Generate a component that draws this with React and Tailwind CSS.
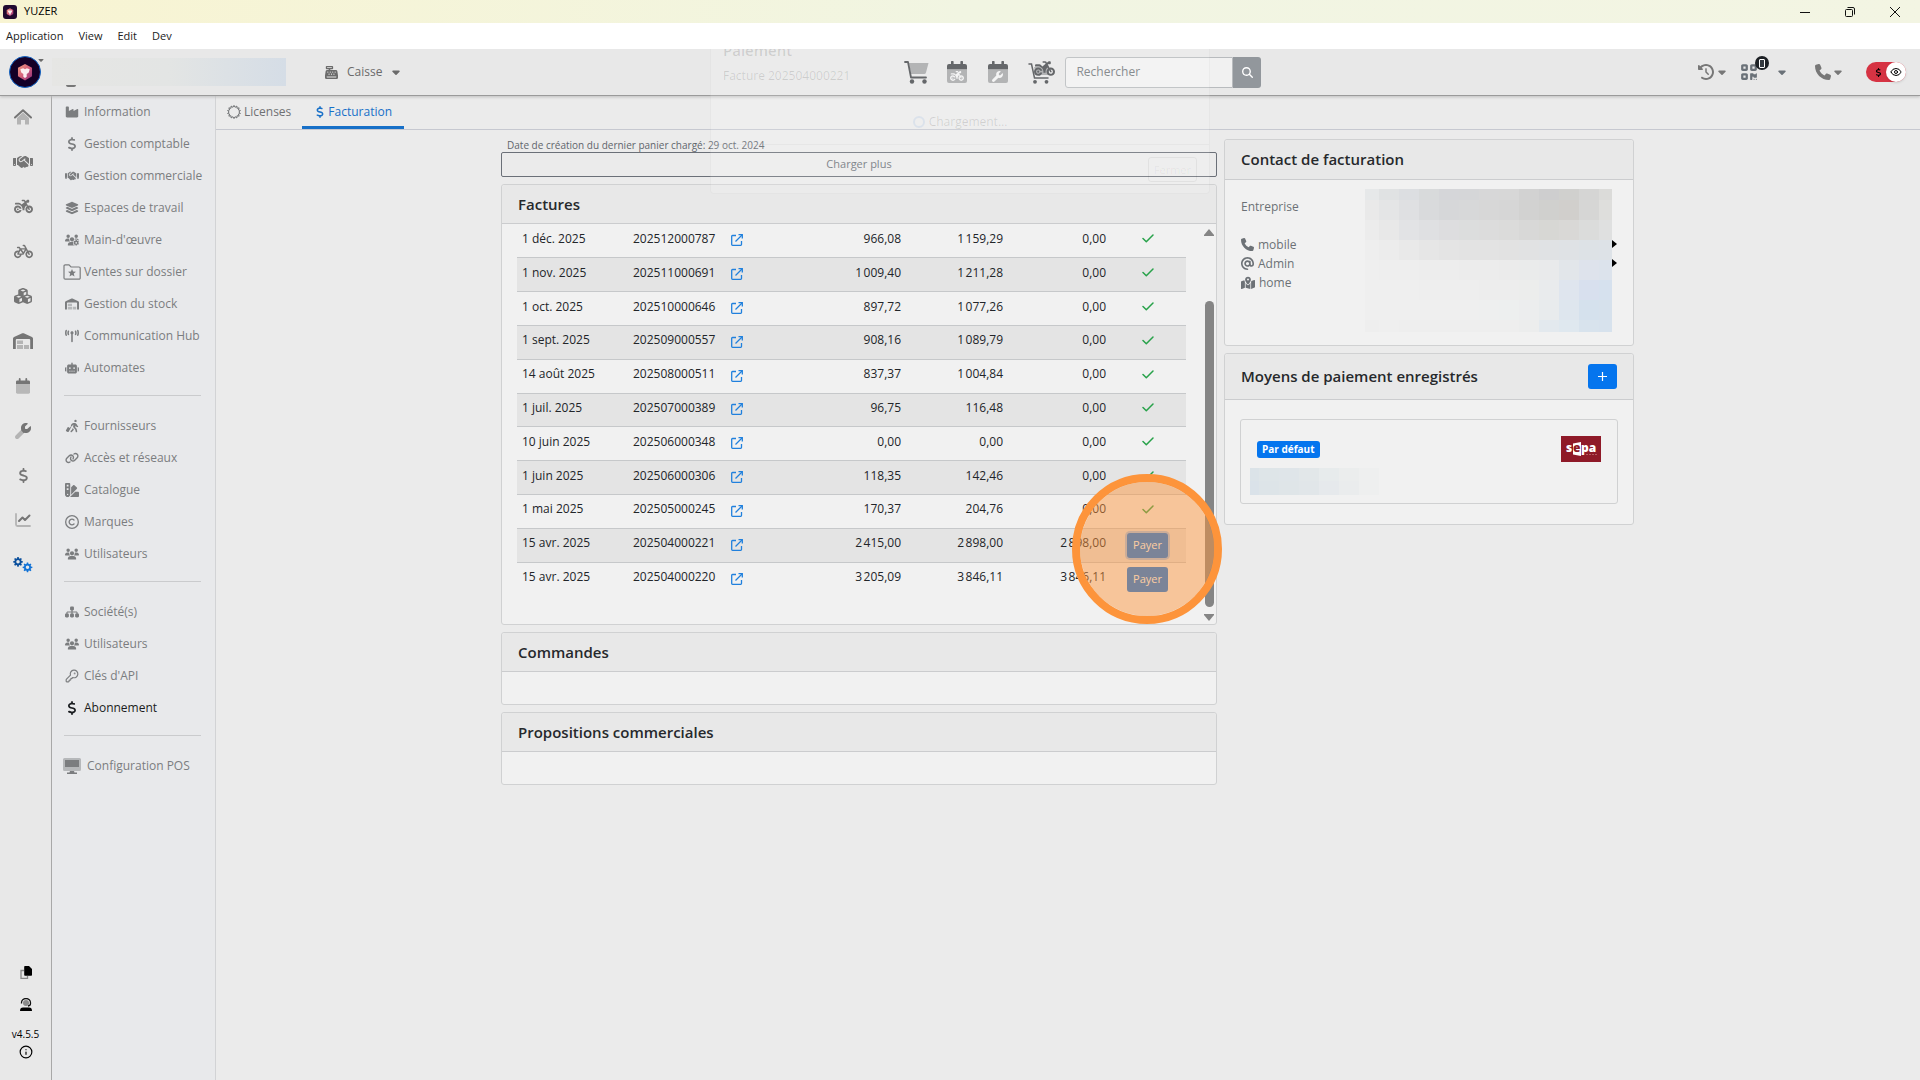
import clsx from "clsx";
import {
  FaIndustry, FaDollarSign, FaHandshake, FaLayerGroup, FaUsersGear,
  FaTowerBroadcast, FaRobot, FaPersonWalkingLuggage, FaLink, FaSwatchbook, FaRegCopyright,
  FaUsers, FaSitemap, FaMotorcycle, FaBicycle, FaCubes, FaQrcode, FaPhone,
  FaClockRotateLeft, FaAt, FaMapLocationDot, FaCashRegister, FaCaretDown, FaMagnifyingGlass,
} from "react-icons/fa6";
import { Eye, Info, KeyRound } from "lucide-react";

const invoices = [
  { date: "1 déc. 2025", number: "202512000787", ht: "966,08", ttc: "1\u202f159,29", due: "0,00" },
  { date: "1 nov. 2025", number: "202511000691", ht: "1\u202f009,40", ttc: "1\u202f211,28", due: "0,00" },
  { date: "1 oct. 2025", number: "202510000646", ht: "897,72", ttc: "1\u202f077,26", due: "0,00" },
  { date: "1 sept. 2025", number: "202509000557", ht: "908,16", ttc: "1\u202f089,79", due: "0,00" },
  { date: "14 août 2025", number: "202508000511", ht: "837,37", ttc: "1\u202f004,84", due: "0,00" },
  { date: "1 juil. 2025", number: "202507000389", ht: "96,75", ttc: "116,48", due: "0,00" },
  { date: "10 juin 2025", number: "202506000348", ht: "0,00", ttc: "0,00", due: "0,00" },
  { date: "1 juin 2025", number: "202506000306", ht: "118,35", ttc: "142,46", due: "0,00" },
  { date: "1 mai 2025", number: "202505000245", ht: "170,37", ttc: "204,76", due: "0,00" },
  { date: "15 avr. 2025", number: "202504000221", ht: "2\u202f415,00", ttc: "2\u202f898,00", due: "2\u202f898,00", unpaid: true, focused: true },
  { date: "15 avr. 2025", number: "202504000220", ht: "3\u202f205,09", ttc: "3\u202f846,11", due: "3\u202f846,11", unpaid: true },
];

/* ---------- icons ---------- */

function Logo({ className }) {
  return (
    <svg viewBox="0 0 32 32" className={className} aria-hidden="true">
      <defs>
        <linearGradient id="gem" x1="0" y1="0" x2="1" y2="1">
          <stop offset="0" stopColor="#f0a080" />
          <stop offset="0.5" stopColor="#d4607a" />
          <stop offset="1" stopColor="#8a2a78" />
        </linearGradient>
      </defs>
      <path d="M16 7.500 23.500 11.500V20.500L16 25 8.500 20.500V11.500Z" fill="url(#gem)" />
      <path d="M11 13 14 12 16 13 18 12 21 13 20 16.500 17.800 18V21L16 22.500 14.200 21V18L12 16.500Z" fill="#fbeef0" />
    </svg>
  );
}

function HomeIcon({ className }) {
  return (
    <svg viewBox="0 0 18 16" className={className} fill="currentColor" aria-hidden="true">
      <path d="M9 3.500 15 9V15.500H11V11H7V15.500H3V9Z" opacity="0.45" />
      <path d="M1 8.500 9 1.200 17 8.500" fill="none" stroke="currentColor" strokeWidth="2" strokeLinecap="round" strokeLinejoin="round" />
    </svg>
  );
}

function CalendarIcon({ className, children }) {
  return (
    <svg viewBox="0 0 20 22" className={className} fill="currentColor" aria-hidden="true">
      <path d="M0 9H20V20a2 2 0 0 1-2 2H2a2 2 0 0 1-2-2Z" opacity="0.42" />
      <path d="M2 3H4V1a1.300 1.300 0 0 1 2.600 0V3H13.400V1A1.300 1.300 0 0 1 16 1V3H18a2 2 0 0 1 2 2V8.500H0V5A2 2 0 0 1 2 3Z" />
      {children}
    </svg>
  );
}

const wrenchPath =
  "M352 320c88.400 0 160-71.600 160-160 0-15.300-2.200-30.100-6.200-44.200-3.100-10.800-16.400-13.200-24.300-5.300l-76.800 76.800c-3 3-7.100 4.700-11.300 4.700H336c-8.800 0-16-7.200-16-16v-57.400c0-4.200 1.700-8.300 4.700-11.300l76.800-76.800c7.900-7.900 5.400-21.200-5.300-24.300C382.100 2.200 367.300 0 352 0 263.600 0 192 71.600 192 160c0 19.100 3.400 37.500 9.500 54.500L19.900 396.100C7.200 408.800 0 426.100 0 444.100 0 481.600 30.400 512 67.900 512c18 0 35.300-7.200 48-19.900l181.600-181.600c17 6.200 35.400 9.500 54.500 9.500z";

function WrenchIcon({ className }) {
  return (
    <svg viewBox="0 0 512 512" className={className} fill="currentColor" aria-hidden="true">
      <clipPath id="wrench-head"><path d="M200 0H512V330H280L190 220Z" /></clipPath>
      <path d={wrenchPath} opacity="0.45" />
      <path d={wrenchPath} clipPath="url(#wrench-head)" />
    </svg>
  );
}

function ChartIcon({ className }) {
  return (
    <svg viewBox="0 0 16 14" className={className} fill="none" stroke="currentColor" strokeWidth="1.800" strokeLinecap="round" strokeLinejoin="round" aria-hidden="true">
      <path d="M1 1V11.500a1.500 1.500 0 0 0 1.500 1.500H15" opacity="0.45" />
      <path d="M4 8 7.500 4.500 10 7 14.500 2.500" strokeWidth="2" />
    </svg>
  );
}

function CartIcon({ className }) {
  return (
    <svg viewBox="0 0 25 23" className={className} fill="currentColor" aria-hidden="true">
      <path d="M5 2H24.500L22 11.500a2 2 0 0 1-2 1.500H7Z" opacity="0.42" />
      <path d="M1 1H4L7 16.500H22" fill="none" stroke="currentColor" strokeWidth="1.800" strokeLinecap="round" strokeLinejoin="round" />
      <circle cx="8" cy="20.500" r="2.200" />
      <circle cx="20.500" cy="20.500" r="2.200" />
    </svg>
  );
}

const gearPath =
  "M8.600 0h2.800l.5 2.700 1.600.7 2.300-1.500 2 2-1.500 2.300.7 1.600 2.700.5v2.800l-2.700.5-.7 1.600 1.500 2.300-2 2-2.300-1.500-1.600.7-.5 2.700H8.600l-.5-2.700-1.600-.7-2.300 1.500-2-2 1.500-2.300-.7-1.600L.3 11.100V8.300L3 7.800l.7-1.600-1.500-2.300 2-2 2.300 1.500 1.600-.7ZM10 6.200a3.500 3.500 0 1 0 0 7 3.500 3.500 0 0 0 0-7Z";

function GearsIcon({ className }) {
  return (
    <svg viewBox="0 0 40 32" className={className} fillRule="evenodd" aria-hidden="true">
      <path d={gearPath} fill="#0a4f9c" />
      <path d={gearPath} fill="#1373d6" transform="translate(19 11)" />
    </svg>
  );
}

function WarehouseIcon({ className }) {
  return (
    <svg viewBox="0 0 20 16" className={className} fill="currentColor" aria-hidden="true">
      <path d="M0 16V5.500Q0 4.500 1 4L9.300.3Q10 0 10.700.3L19 4Q20 4.500 20 5.500V16H17.200V7A1 1 0 0 0 16.200 6H3.800A1 1 0 0 0 2.800 7V16Z" />
      <path d="M4 7.500H10V11H4ZM4 12H10V16H4ZM11 12H16V16H11Z" opacity="0.45" />
    </svg>
  );
}

function FolderStarIcon({ className }) {
  return (
    <svg viewBox="0 0 18 16" className={className} aria-hidden="true">
      <path d="M1 14V2a1.200 1.200 0 0 1 1.200-1.200H6L8 3H16a1.200 1.200 0 0 1 1.200 1.200V14A1.200 1.200 0 0 1 16 15.200H2.200A1.200 1.200 0 0 1 1 14Z" fill="none" stroke="currentColor" strokeWidth="1.200" />
      <path d="M9 5 10.100 7.600 13 7.800 10.800 9.600 11.500 12.400 9 10.900 6.500 12.400 7.200 9.600 5 7.800 7.900 7.600Z" fill="currentColor" />
    </svg>
  );
}

function ScreenIcon({ className }) {
  return (
    <svg viewBox="0 0 18 16" className={className} fill="currentColor" aria-hidden="true">
      <path d="M1.500 0h15A1.500 1.500 0 0 1 18 1.500v10A1.500 1.500 0 0 1 16.500 13h-15A1.500 1.500 0 0 1 0 11.500v-10A1.500 1.500 0 0 1 1.500 0Z" opacity="0.45" />
      <path d="M2 2H16V9H2ZM7 13H11L11.500 14.500H14V16H4V14.500H6.500Z" />
    </svg>
  );
}

function CopyIcon({ className }) {
  return (
    <svg viewBox="0 0 12 13" className={className} aria-hidden="true">
      <path d="M4 4.500H1V12.300H7.500V10" fill="none" stroke="#8a8a8a" strokeWidth="1.300" />
      <path d="M5 0H9L12 3V9a.8.8 0 0 1-.8.8H5A.8.8 0 0 1 4.200 9V.8A.8.8 0 0 1 5 0Z" />
    </svg>
  );
}

function SupportIcon({ className }) {
  return (
    <svg viewBox="0 0 12 13" className={className} aria-hidden="true">
      <circle cx="6" cy="5" r="3" fill="#8a8a8a" />
      <path d="M1.500 5.500V4.800A4.400 4.200 0 0 1 10.500 4.800V5.500Q10.500 7.800 8 8" fill="none" stroke="#111" strokeWidth="1.300" />
      <path d="M0 13Q0 9.600 3 9.600H9Q12 9.600 12 13Z" />
    </svg>
  );
}

const sealPoints = Array.from({ length: 28 }, (_, i) => {
  const r = i % 2 ? 4.8 : 6.6;
  const a = (i * Math.PI) / 14;
  return `${(7 + r * Math.sin(a)).toFixed(2)},${(7 - r * Math.cos(a)).toFixed(2)}`;
}).join(" ");

function SealIcon({ className }) {
  return (
    <svg viewBox="0 0 14 14" className={className} fill="none" stroke="currentColor" strokeLinejoin="round" aria-hidden="true">
      <polygon points={sealPoints} />
    </svg>
  );
}

function OpenIcon() {
  return (
    <svg viewBox="0 0 12 12" className="size-3" fill="none" stroke="#2080dd" strokeWidth="1.300" aria-hidden="true">
      <path d="M5 1.500H1.500A.8.800 0 0 0 .7 2.300V10.500A.8.800 0 0 0 1.500 11.300H9.700A.8.800 0 0 0 10.500 10.500V7" />
      <path d="M4.500 7.500 11 1" />
      <path d="M7.500.7H11.300V4.500" />
    </svg>
  );
}

function CheckIcon() {
  return (
    <svg viewBox="0 0 12 9" className="mx-auto h-[9px] w-3" fill="none" stroke="#28a24a" strokeWidth="1.500" strokeLinecap="round" strokeLinejoin="round" aria-label="Payée">
      <path d="M1 4.500 4.300 7.800 11 1" />
    </svg>
  );
}

/* ---------- window chrome ---------- */

function TitleBar() {
  return (
    <div className="flex h-[23px] items-center bg-linear-to-r from-[#f8f4d2] via-[#f1f5e2] to-[#f3f5e3] pr-5 pl-[3px] text-black">
      <Logo className="size-[14px] rounded-[3px] bg-[#220a30]" />
      <span className="ml-[7px] text-[11px]">YUZER</span>
      <div className="ml-auto flex items-center gap-[35px]">
        <button aria-label="Réduire">
          <svg viewBox="0 0 10 10" className="size-[10px]" stroke="#111" fill="none"><path d="M0 5.500H10" /></svg>
        </button>
        <button aria-label="Restaurer">
          <svg viewBox="0 0 10 10" className="size-[10px]" stroke="#111" fill="none"><rect x=".5" y="2.500" width="7" height="7" rx="1" /><path d="M2.500.5H8A1.500 1.500 0 0 1 9.500 2V7.500" /></svg>
        </button>
        <button aria-label="Fermer la fenêtre">
          <svg viewBox="0 0 10 10" className="size-[10px]" stroke="#111" fill="none"><path d="M0 0 10 10M10 0 0 10" /></svg>
        </button>
      </div>
    </div>
  );
}

function MenuBar() {
  return (
    <nav className="flex h-[26px] items-center gap-[15px] bg-white px-[6px] text-[11px] text-[#222]">
      <button>Application</button>
      <button>View</button>
      <button>Edit</button>
      <button>Dev</button>
    </nav>
  );
}

/* ---------- header ---------- */

function Header() {
  return (
    <header className="relative z-10 flex h-[46px] items-center bg-[#e8e8e8] text-[#6b6b6b] shadow-[0_1px_0_#9a9a9a,0_2px_3px_#bdbdbd]">
      <div className="flex w-[47%] shrink-0 items-center">
        <button className="relative ml-[9px] size-8 rounded-full border border-[#1266c8] bg-[#140026]" aria-label="Compte">
          <Logo className="size-full" />
          <FaCaretDown className="absolute -top-[1px] -right-[5px] size-2" />
        </button>
        <div className="relative ml-[11px] h-7 w-[234px] bg-linear-to-r from-[#e6e6e4] via-[#e3e5e4] to-[#d5dde6]">
          <span className="absolute -bottom-[1px] left-[14px] h-[2px] w-[10px] rounded-b-full bg-[#777]" />
        </div>
        <button className="ml-[39px] flex items-center text-[12px]">
          <FaCashRegister className="size-[13px]" />
          <span className="mr-2 ml-[9px]">Caisse</span>
          <FaCaretDown className="size-3" />
        </button>
      </div>
      <div className="flex items-center pl-[2px] text-[#4a4d50]">
        <button aria-label="Panier"><CartIcon className="h-[23px] w-[25px]" /></button>
        <button aria-label="Livraisons" className="ml-[18px]">
          <CalendarIcon className="h-[22px] w-5">
            <FaMotorcycle x="3" y="8" size={14} color="#f2f2f2" />
          </CalendarIcon>
        </button>
        <button aria-label="Atelier" className="ml-[21px]">
          <CalendarIcon className="h-[22px] w-5">
            <svg x="4" y="10" width="11" height="11" viewBox="0 0 512 512"><path d={wrenchPath} fill="#f2f2f2" /></svg>
          </CalendarIcon>
        </button>
        <button aria-label="Vente de véhicule" className="ml-5">
          <svg viewBox="0 0 28 23" className="h-[23px] w-7" fill="currentColor">
            <path d="M6 6H21V14H8Z" opacity="0.42" />
            <path d="M1 3H3.500L6.500 17H20" fill="none" stroke="currentColor" strokeWidth="1.500" strokeLinecap="round" />
            <circle cx="7" cy="20.800" r="1.900" />
            <circle cx="18.500" cy="20.800" r="1.900" />
            <FaMotorcycle x="6" y="-3" size={21} />
          </svg>
        </button>
        <form className="ml-[9px] flex h-[31px]" onSubmit={(e) => e.preventDefault()}>
          <input
            aria-label="Rechercher"
            placeholder="Rechercher"
            className="w-[168px] rounded-l-[3px] border border-[#b8bbbe] bg-[#f1f1f1] px-[10px] text-[12px] placeholder:text-[#73787c]"
          />
          <button aria-label="Lancer la recherche" className="flex w-7 items-center justify-center rounded-r-[3px] bg-[#92979c] text-white">
            <FaMagnifyingGlass className="size-[11px]" />
          </button>
        </form>
      </div>
      <div className="mr-[14px] ml-auto flex items-center text-[#777]">
        <button className="flex items-center gap-[2px]" aria-label="Historique">
          <FaClockRotateLeft className="size-4" />
          <FaCaretDown className="size-3" />
        </button>
        <button className="relative ml-3 flex items-center text-[#6a7178]" aria-label="QR code">
          <FaQrcode className="size-[18px]" />
          <span className="absolute -top-[7px] left-[15px] flex size-[14px] items-center justify-center rounded-full bg-[#1d2125]">
            <span className="h-[9px] w-[6px] rounded-[1px] border border-white bg-[#343a40]" />
          </span>
          <FaCaretDown className="ml-[18px] size-3" />
        </button>
        <button className="ml-[27px] flex items-center gap-px" aria-label="Appels">
          <FaPhone className="size-4" />
          <FaCaretDown className="size-3" />
        </button>
        <button role="switch" aria-checked="true" aria-label="Afficher les prix" className="ml-[22px] flex h-5 w-10 items-center rounded-full bg-[#d63343] text-black">
          <FaDollarSign className="ml-2 size-[9px]" />
          <span className="ml-auto flex size-5 items-center justify-center rounded-full bg-white shadow-sm">
            <Eye className="size-3" />
          </span>
        </button>
      </div>
    </header>
  );
}

/* ---------- navigation ---------- */

const railItems = [
  { id: "Accueil", icon: <HomeIcon className="h-4 w-[18px]" /> },
  { id: "Commerce", icon: <FaHandshake className="size-5" /> },
  { id: "Motos", icon: <FaMotorcycle className="size-[19px]" /> },
  { id: "Vélos", icon: <FaBicycle className="size-[19px]" /> },
  { id: "Pièces", icon: <FaCubes className="size-[18px]" /> },
  { id: "Stock", icon: <WarehouseIcon className="h-4 w-5" /> },
  { id: "Agenda", icon: <CalendarIcon className="h-4 w-[14px]" /> },
  { id: "Atelier", icon: <WrenchIcon className="size-4" /> },
  { id: "Comptabilité", icon: <FaDollarSign className="size-[15px]" /> },
  { id: "Statistiques", icon: <ChartIcon className="h-[14px] w-4" /> },
  { id: "Configuration", icon: <GearsIcon className="h-4 w-5" /> },
];

function Rail() {
  return (
    <aside className="flex w-[52px] shrink-0 flex-col border-r border-[#a8a8a8] bg-[#e8e8e8] text-[#757575]">
      <nav className="flex h-[492px] w-[46px] flex-col">
        {railItems.map((item) => (
          <a key={item.id} href="#" aria-label={item.id} className="flex flex-1 items-center justify-center">
            {item.icon}
          </a>
        ))}
      </nav>
      <div className="mt-auto mb-[21px] flex flex-col items-center text-black">
        <button aria-label="Copier"><CopyIcon className="h-[13px] w-3" /></button>
        <button aria-label="Support" className="mt-[19px]"><SupportIcon className="h-[13px] w-3" /></button>
        <span className="mt-4 text-[10px] leading-[14px]">v4.5.5</span>
        <button aria-label="Informations" className="mt-1"><Info className="size-[14px]" /></button>
      </div>
    </aside>
  );
}

const sidebarGroups = [
  [
    { label: "Information", icon: FaIndustry },
    { label: "Gestion comptable", icon: FaDollarSign },
    { label: "Gestion commerciale", icon: FaHandshake },
    { label: "Espaces de travail", icon: FaLayerGroup },
    { label: "Main-d'œuvre", icon: FaUsersGear },
    { label: "Ventes sur dossier", icon: FolderStarIcon, large: true },
    { label: "Gestion du stock", icon: WarehouseIcon },
    { label: "Communication Hub", icon: FaTowerBroadcast },
    { label: "Automates", icon: FaRobot },
  ],
  [
    { label: "Fournisseurs", icon: FaPersonWalkingLuggage },
    { label: "Accès et réseaux", icon: FaLink },
    { label: "Catalogue", icon: FaSwatchbook },
    { label: "Marques", icon: FaRegCopyright },
    { label: "Utilisateurs", icon: FaUsers },
  ],
  [
    { label: "Société(s)", icon: FaSitemap },
    { label: "Utilisateurs", icon: FaUsers },
    { label: "Clés d'API", icon: KeyRound },
    { label: "Abonnement", icon: FaDollarSign, active: true },
  ],
  [{ label: "Configuration POS", icon: ScreenIcon, large: true, spaced: true }],
];

function Sidebar() {
  return (
    <nav className="w-[164px] shrink-0 border-r border-[#d2d3d5] bg-[#e8e9eb] pt-px pr-[14px] pl-3 text-[12px] text-[#7b7d7f]">
      {sidebarGroups.map((group, i) => (
        <div key={i} className={clsx(i > 0 && "mt-[11px] border-t border-[#cacbcd] pt-[14px]")}>
          {group.map(({ label, icon: Icon, active, large, spaced }) => (
            <a key={label} href="#" className={clsx("flex h-8 items-center whitespace-nowrap", active && "text-[#1a1d20]")}>
              <span className={clsx("flex w-4 shrink-0 items-center justify-center", spaced ? "mr-[7px]" : "mr-1")}>
                <Icon className={large ? "h-4 w-[18px] shrink-0" : "size-[14px] shrink-0"} />
              </span>
              {label}
            </a>
          ))}
        </div>
      ))}
    </nav>
  );
}

function Tabs() {
  return (
    <div className="flex h-[35px] items-end border-b border-[#c6c8d0] text-[12px] text-[#6f7173]">
      <a href="#" className="flex h-[34px] items-center gap-[3px] px-[11px]">
        <SealIcon className="size-[14px]" />
        Licenses
      </a>
      <a href="#" className="flex h-[34px] items-center gap-[2px] border-b-3 border-[#1770c8] px-3 pt-[3px] text-[#1770c8]">
        <FaDollarSign className="size-3" />
        Facturation
      </a>
    </div>
  );
}

/* ---------- content ---------- */

const headerSizes = { sm: "h-[39px]", md: "h-10", lg: "h-[46px]" };

function Card({ title, action, size = "sm", children }) {
  return (
    <section className="rounded-[3px] border border-[#d0d1d2] bg-[#f1f1f1]">
      <div className={clsx("flex items-center justify-between rounded-t-[3px] border-b border-[#cbccce] bg-[#e8e8e8] px-4", headerSizes[size])}>
        <h2 className="text-[15px] font-semibold text-[#26292c]">{title}</h2>
        {action}
      </div>
      {children}
    </section>
  );
}

function PayButton({ focused }) {
  return (
    <button className={clsx("mx-auto block h-[25px] w-[41px] rounded-[3px] bg-[#0575ee] text-[11px] text-white", focused && "shadow-[0_0_0_2px_#9fc4ee]")}>
      Payer
    </button>
  );
}

function InvoicesTable() {
  return (
    <div className="flex h-[400px]">
      <div className="flex-1 pl-[15px]">
        <table className="h-[372px] w-full table-fixed text-[12px] text-[#222529]">
          <colgroup>
            <col className="w-[111px]" />
            <col className="w-[98px]" />
            <col className="w-[60px]" />
            <col />
            <col className="w-[102px]" />
            <col className="w-[103px]" />
            <col className="w-[75px]" />
          </colgroup>
          <tbody>
            {invoices.map((inv) => (
              <tr key={inv.number} className="h-[33px] border-t border-[#c6c8ca] first:border-t-0 even:bg-[#e4e4e4]">
                <td className="pb-1 pl-[5px]">{inv.date}</td>
                <td className="pb-1 pl-[5px]">{inv.number}</td>
                <td className="pb-px pl-[5px]">
                  <a href="#" aria-label={`Ouvrir ${inv.number}`} className="block w-3"><OpenIcon /></a>
                </td>
                <td className="pr-[5px] pb-1 text-right">{inv.ht}</td>
                <td className="pr-[5px] pb-1 text-right">{inv.ttc}</td>
                <td className="pr-[5px] pb-1 text-right">{inv.due}</td>
                <td className={clsx("relative pr-[2px]", !inv.unpaid && "pb-1")}>
                  {inv.unpaid ? <PayButton focused={inv.focused} /> : <CheckIcon />}
                  {inv.focused && (
                    <span className="pointer-events-none absolute top-[-55px] left-[-39px] z-10 size-[150px] rounded-full border-8 border-[#fd943b] bg-[#fd943b]/48 bg-clip-padding" />
                  )}
                </td>
              </tr>
            ))}
          </tbody>
        </table>
      </div>
      <div className="flex w-[30px] flex-col items-end pt-[5px] pr-[2px] pb-[3px] text-[#858585]">
        <svg viewBox="0 0 10 7" className="h-[7px] w-[10px]" fill="currentColor"><path d="M5 0 10 6V7H0V6Z" /></svg>
        <span className="mt-[65px] w-[9px] flex-1 rounded-full bg-[#858585]" />
        <svg viewBox="0 0 10 7" className="mt-[7px] h-[7px] w-[10px]" fill="currentColor"><path d="M5 7 10 1V0H0V1Z" /></svg>
      </div>
    </div>
  );
}

const contactMosaic = {
  cols: [14, 20, 20, 20, 20, 20, 20, 20, 20, 20, 20, 20, 13],
  rows: [11, 20, 20, 20, 20, 20, 20, 12],
  colors: [
    "e6e8e9 e0e2e3 dcdee1 d8dadb d5d6d9 d5d6d8 d7d7d8 d7d7d7 d2d2d2 cececf d0d0ce d5d5d4 dbdbd9",
    "e9e9e9 e4e5e6 dfe0e2 d9dadc d6d7d9 d7d8d9 d7d7d7 d6d6d6 d2d2d1 d0d0ce d1cfcc d6d6d5 dededc",
    "ececec e8e8e8 e2e3e5 dfe0e2 dddddf dcdddd dcdcdc dbdbda d8d8d7 d7d7d4 d9d8d6 dbdcdb dfe0e0",
    "eeeeee ececec e9e9e9 e6e6e6 e4e4e4 e3e3e3 e3e3e3 e2e2e2 e1e2e3 e0e2e4 dfe2e5 dde2e6 dde2e7",
    "efefef eeeeee eeeeee ededed ededed ececec ececec ebebeb eaebeb e9eaeb e2e6ea dee3ec dce3ec",
    "efefef efefef efefef eeeeee eeeeee eeeeee ededed ededed ecedec e9ebed dfe5ee d8e0ee d6e1ee",
    "efefef efefef efefef efefef efefef efefef eeefef edefef ecedee e8ebed dee6ee d5e1ed d6e1ec",
    "eeeeee efefef eeeeee eeeeee eeeeee eeeeee eeeeee eeeeee eceded e3e9ee dfe8ef d8e3ed d7e2ed",
  ],
};

const mandateMosaic = {
  cols: [9, 20, 20, 20, 20, 20, 20],
  rows: [13, 14],
  colors: [
    "dbe3e8 dee5e8 dfe5e9 e2e7e9 e7ebec ebeded eeefef",
    "dae2e9 dde4e8 dfe5e8 e1e6e9 e6e9ec eaeced eeefef",
  ],
};

function Mosaic({ data, className }) {
  const xs = data.cols.map((_, i) => data.cols.slice(0, i).reduce((a, b) => a + b, 0));
  const ys = data.rows.map((_, i) => data.rows.slice(0, i).reduce((a, b) => a + b, 0));
  const width = data.cols.reduce((a, b) => a + b, 0);
  const height = data.rows.reduce((a, b) => a + b, 0);
  return (
    <svg viewBox={`0 0 ${width} ${height}`} preserveAspectRatio="none" className={className} shapeRendering="crispEdges" aria-hidden="true">
      {data.colors.map((row, r) =>
        row.split(" ").map((color, c) => (
          <rect key={`${r}-${c}`} x={xs[c]} y={ys[r]} width={data.cols[c]} height={data.rows[r]} fill={`#${color}`} />
        ))
      )}
    </svg>
  );
}

function BillingContact() {
  return (
    <Card title="Contact de facturation" size="md">
      <div className="flex h-[165px] px-4 pt-[9px] text-[12px] leading-[19px] text-[#6c7176]">
        <div className="w-[124px] shrink-0 pt-2">
          <p>Entreprise</p>
          <p className="mt-[19px] flex items-center gap-1"><FaPhone className="size-[13px]" />mobile</p>
          <p className="flex items-center gap-1"><FaAt className="size-[13px]" />Admin</p>
          <p className="flex items-center gap-1"><FaMapLocationDot className="size-[14px]" />home</p>
        </div>
        <Mosaic data={contactMosaic} className="h-[143px] min-w-0 flex-1" />
        <div className="flex flex-col gap-[11px] pt-[51px] text-black">
          <svg viewBox="0 0 5 8" className="h-2 w-[5px]"><path d="M0 0 5 4 0 8Z" /></svg>
          <svg viewBox="0 0 5 8" className="h-2 w-[5px]"><path d="M0 0 5 4 0 8Z" /></svg>
        </div>
      </div>
    </Card>
  );
}

function SepaLogo() {
  return (
    <svg viewBox="0 0 40 26" className="h-[26px] w-10" role="img" aria-label="SEPA">
      <rect width="40" height="26" fill="#8f1a28" />
      <path d="M12 7.500 20 6V20L12 18.500Z" fill="#fff" />
      <g className="font-['Open_Sans',sans-serif]" fontSize="12" fontWeight="800">
        <text x="5" y="16" fill="#fff">s</text>
        <text x="12" y="16" fill="#8f1a28">e</text>
        <text x="20" y="16" fill="#fff">pa</text>
      </g>
      <path d="M25 18.500H36" stroke="#c88" strokeWidth=".6" strokeDasharray="2 1" />
    </svg>
  );
}

function PaymentMethods() {
  return (
    <Card
      title="Moyens de paiement enregistrés"
      size="lg"
      action={
        <button aria-label="Ajouter un moyen de paiement" className="flex h-[25px] w-[29px] items-center justify-center rounded-[3px] bg-[#0575ee] text-white">
          <svg viewBox="0 0 9 9" className="size-[9px]" stroke="currentColor" strokeWidth="1.200"><path d="M4.500 0V9M0 4.500H9" /></svg>
        </button>
      }
    >
      <div className="px-[15px] pt-[19px] pb-5">
        <div className="h-[85px] rounded-[3px] border border-[#d0d1d2] pt-4 pr-4 pl-[9px]">
          <div className="flex items-center justify-between">
            <span className="ml-[7px] rounded-[3px] bg-[#0575ee] px-[5px] text-[10px] leading-[17px] font-bold text-white">Par défaut</span>
            <SepaLogo />
          </div>
          <Mosaic data={mandateMosaic} className="mt-[6px] h-[27px] w-[129px]" />
        </div>
      </div>
    </Card>
  );
}

/* payment dialog, caught at the start of its fade-in */
function PaymentDialog() {
  return (
    <div className="pointer-events-none absolute inset-x-0 top-0 z-20 flex justify-center">
      <div className="h-[145px] w-[500px] rounded-b-[4px] border-x border-b border-black/3 bg-white/15 text-black/12">
        <div className="-mt-[10px] px-3">
          <p className="text-[15px] leading-[22px] font-semibold">Paiement</p>
          <p className="mt-[5px] text-[12px] leading-5">Facture 202504000221</p>
        </div>
        <p className="mt-[26px] flex items-center justify-center gap-1 text-[12px] leading-5">
          <span className="size-3 rounded-full border-2 border-[#3a7bd5]/10" />
          Chargement...
        </p>
        <div className="mt-3 flex justify-end border-t border-black/3 px-3 pt-3">
          <span className="rounded-[3px] border border-black/5 px-[5px] text-[11px] leading-[23px] text-black/5">Fermer</span>
        </div>
      </div>
    </div>
  );
}

export default function App() {
  return (
    <div className="flex min-h-screen flex-col bg-[#ebebeb] font-['Open_Sans','Noto_Sans',sans-serif]">
      <TitleBar />
      <MenuBar />
      <div className="relative flex flex-1 flex-col overflow-hidden">
        <Header />
        <div className="flex flex-1">
          <Rail />
          <Sidebar />
          <main className="min-w-0 flex-1">
            <Tabs />
            <div className="pr-px">
              <div className="mx-auto grid max-w-[1133px] grid-cols-[717fr_409fr] items-start gap-[7px] pt-[9px]">
                <div className="flex flex-col gap-[7px]">
                  <div>
                    <p className="pl-[6px] text-[10px] leading-[13px] text-[#5f656b]">Date de création du dernier panier chargé: 29 oct. 2024</p>
                    <button className="block h-[25px] w-full rounded-[2px] border border-[#6b7078] text-[11px] text-[#6b7178]">Charger plus</button>
                  </div>
                  <Card title="Factures"><InvoicesTable /></Card>
                  <Card title="Commandes"><div className="h-8" /></Card>
                  <Card title="Propositions commerciales"><div className="h-8" /></Card>
                </div>
                <div className="flex flex-col gap-[7px]">
                  <BillingContact />
                  <PaymentMethods />
                </div>
              </div>
            </div>
          </main>
        </div>
        <PaymentDialog />
      </div>
    </div>
  );
}
